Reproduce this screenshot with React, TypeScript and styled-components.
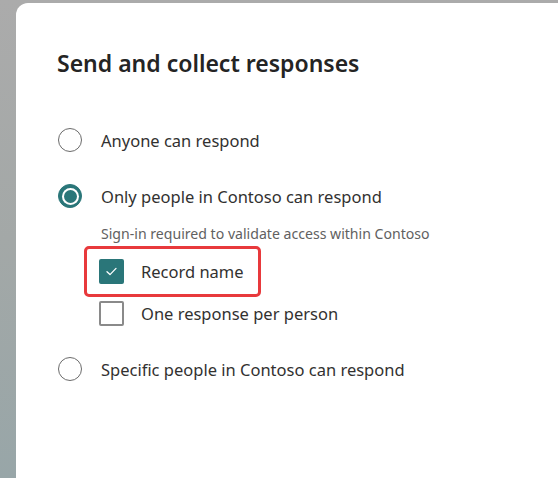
import styled, { createGlobalStyle } from 'styled-components';

const GlobalStyle = createGlobalStyle`
  html, body {
    margin: 0;
    padding: 0;
    height: 100%;
  }
  body {
    background: linear-gradient(180deg, #ababab 0%, #a3a8a7 50%, #98a6a8 100%);
    font-family: 'Noto Sans', 'Open Sans', sans-serif;
    overflow: hidden;
  }
`;

const Page = styled.div`
  height: 478px;
  padding: 3px 0 0 16px;
  box-sizing: border-box;
  display: flex;
`;

const Card = styled.div`
  flex: 1;
  background: #ffffff;
  border-top-left-radius: 12px;
  padding: 44px 0 0 42px;
  display: flex;
  flex-direction: column;
`;

const Title = styled.h2`
  margin: 0 0 0 -1px;
  font-size: 23px;
  line-height: 32px;
  font-weight: 600;
  color: #242424;
`;

const Options = styled.div`
  margin-top: 45px;
  display: flex;
  flex-direction: column;
`;

const RadioRow = styled.label<{ gapTop?: number }>`
  display: flex;
  align-items: center;
  gap: 19px;
  height: 32px;
  margin-top: ${p => p.gapTop ?? 0}px;
  font-size: 16.5px;
  color: #323130;
`;

const RadioCircle = styled.span<{ checked?: boolean }>`
  width: 24px;
  height: 24px;
  box-sizing: border-box;
  border-radius: 50%;
  border: 1.5px solid ${p => (p.checked ? '#2a7679' : '#6b6b6b')};
  background: ${p => (p.checked ? '#2a7679' : '#fff')};
  display: flex;
  align-items: center;
  justify-content: center;
  flex-shrink: 0;
`;

const RadioDot = styled.span`
  width: 13px;
  height: 13px;
  border-radius: 50%;
  background: #2a7679;
  box-shadow: 0 0 0 2px #ffffff;
`;

const SubSection = styled.div`
  padding-left: 41px;
  display: flex;
  flex-direction: column;
`;

const Hint = styled.div`
  margin: 12px 0 0 2px;
  font-size: 14.1px;
  line-height: 20px;
  color: #616161;
`;

const CheckRow = styled.label<{ highlight?: boolean; gapTop?: number }>`
  position: relative;
  align-self: flex-start;
  display: flex;
  align-items: center;
  gap: 17px;
  height: 32px;
  margin-top: ${p => p.gapTop ?? 0}px;
  font-size: 16.5px;
  color: #323130;

  ${p =>
    p.highlight &&
    `
    &::after {
      content: '';
      position: absolute;
      top: -9px;
      bottom: -10px;
      left: -15px;
      right: -17px;
      border: 3px solid #e8393c;
      border-radius: 5px;
      pointer-events: none;
    }
  `}
`;

const CheckBox = styled.span<{ checked?: boolean }>`
  width: 25px;
  height: 25px;
  box-sizing: border-box;
  border-radius: 2px;
  border: 2px solid ${p => (p.checked ? '#2a7679' : '#8a8a8a')};
  background: ${p => (p.checked ? '#2a7679' : '#fff')};
  display: flex;
  align-items: center;
  justify-content: center;
  flex-shrink: 0;
`;

const Radio = ({ checked, label, gapTop }: { checked?: boolean; label: string; gapTop?: number }) => (
  <RadioRow gapTop={gapTop}>
    <RadioCircle checked={checked}>{checked && <RadioDot />}</RadioCircle>
    {label}
  </RadioRow>
);

const Check = ({
  checked,
  label,
  highlight,
  gapTop,
}: {
  checked?: boolean;
  label: string;
  highlight?: boolean;
  gapTop?: number;
}) => (
  <CheckRow highlight={highlight} gapTop={gapTop}>
    <CheckBox checked={checked}>
      {checked && (
        <svg width="11" height="9" viewBox="0 0 11 9" fill="none">
          <path d="M1 4.8 L4 7.6 L10 1.4" stroke="#fff" strokeWidth="1.3" strokeLinecap="round" strokeLinejoin="round" />
        </svg>
      )}
    </CheckBox>
    {label}
  </CheckRow>
);

export default function App() {
  return (
    <>
      <GlobalStyle />
      <Page>
        <Card>
          <Title>Send and collect responses</Title>
          <Options>
            <Radio label="Anyone can respond" />
            <Radio checked label="Only people in Contoso can respond" gapTop={24} />
            <SubSection>
              <Hint>Sign-in required to validate access within Contoso</Hint>
              <Check checked highlight label="Record name" gapTop={11} />
              <Check label="One response per person" gapTop={10} />
            </SubSection>
            <Radio label="Specific people in Contoso can respond" gapTop={24} />
          </Options>
        </Card>
      </Page>
    </>
  );
}
